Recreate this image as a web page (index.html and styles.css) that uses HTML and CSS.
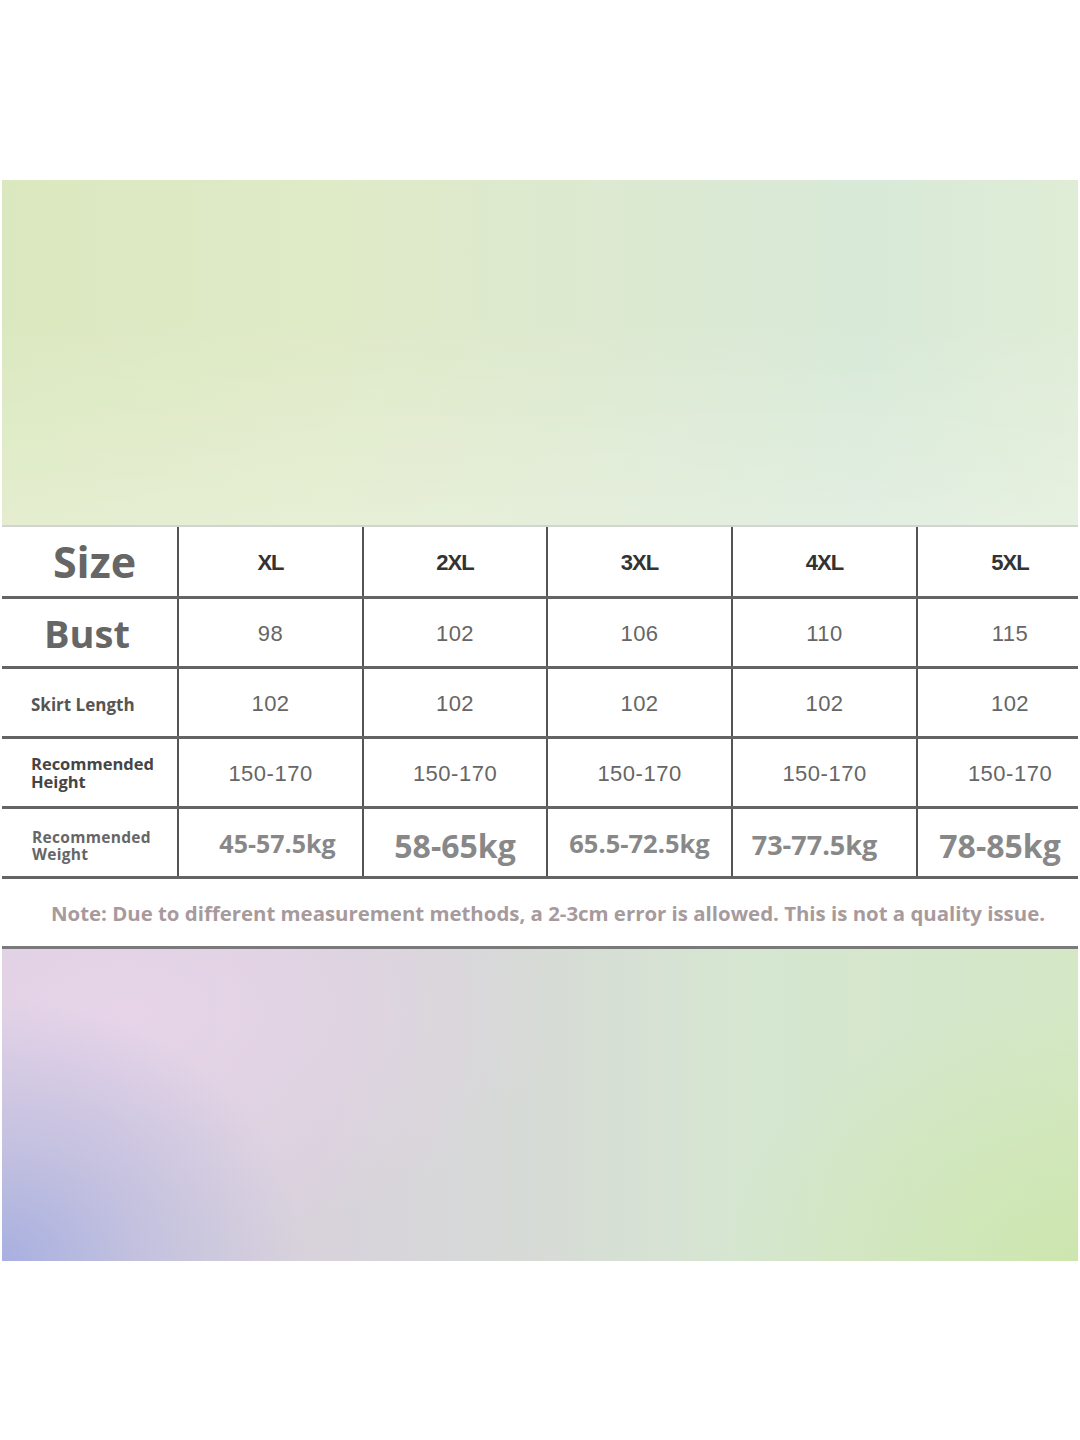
FILE: index.html
```html
<!DOCTYPE html>
<html lang="en">
<head>
<meta charset="utf-8">
<title>Size Chart</title>
<link rel="stylesheet" href="styles.css">
</head>
<body>
<div class="sheet">
  <div class="banner-top"></div>
  <div class="chart">
    <div class="row row-head">
      <div class="cell label label-size">Size</div>
      <div class="cell head">XL</div>
      <div class="cell head">2XL</div>
      <div class="cell head">3XL</div>
      <div class="cell head">4XL</div>
      <div class="cell head last">5XL</div>
    </div>
    <div class="row">
      <div class="cell label label-bust">Bust</div>
      <div class="cell val">98</div>
      <div class="cell val">102</div>
      <div class="cell val">106</div>
      <div class="cell val">110</div>
      <div class="cell val last">115</div>
    </div>
    <div class="row">
      <div class="cell label label-small">Skirt Length</div>
      <div class="cell val">102</div>
      <div class="cell val">102</div>
      <div class="cell val">102</div>
      <div class="cell val">102</div>
      <div class="cell val last">102</div>
    </div>
    <div class="row">
      <div class="cell label label-rec"><span>Recommended<br>Height</span></div>
      <div class="cell val">150-170</div>
      <div class="cell val">150-170</div>
      <div class="cell val">150-170</div>
      <div class="cell val">150-170</div>
      <div class="cell val last">150-170</div>
    </div>
    <div class="row">
      <div class="cell label label-weight"><span>Recommended<br>Weight</span></div>
      <div class="cell kg kg-a">45-57.5kg</div>
      <div class="cell kg kg-b">58-65kg</div>
      <div class="cell kg kg-c">65.5-72.5kg</div>
      <div class="cell kg kg-d">73-77.5kg</div>
      <div class="cell kg kg-e">78-85kg</div>
    </div>
    <div class="note">Note: Due to different measurement methods, a 2-3cm error is allowed. This is not a quality issue.</div>
  </div>
  <div class="banner-bottom"></div>
</div>
</body>
</html>
```
FILE: styles.css
```css
html, body {
  margin: 0;
  padding: 0;
  background: #ffffff;
}

.sheet {
  width: 1076px;
  margin: 180px 0 0 2px;
  display: flex;
  flex-direction: column;
}

.banner-top {
  height: 345px;
  background:
    linear-gradient(to bottom, rgba(255,255,255,0) 40%, rgba(255,255,255,0.25) 100%),
    linear-gradient(90deg, #dbe8bf 0%, #dfeac7 30%, #dde9d0 55%, #d8e9d8 80%, #dfedd6 100%);
}

.chart {
  border-top: 2px solid #d2d4d0;
  background: #ffffff;
  display: flex;
  flex-direction: column;
}

.row {
  display: grid;
  grid-template-columns: 177px 185px 184px 185px 185px 1fr;
  height: 70px;
  border-bottom: 3px solid #646464;
  box-sizing: border-box;
}

.row-head {
  height: 72px;
}

.cell {
  display: flex;
  align-items: center;
  justify-content: center;
  border-right: 2px solid #555555;
  box-sizing: border-box;
}

.cell.last {
  border-right: none;
  padding-left: 24px;
}

.label {
  font-family: "Open Sans", "Noto Sans", sans-serif;
  font-weight: 700;
  color: #666666;
}

.label-size {
  font-size: 43px;
  padding-left: 10px;
}

.label-bust {
  font-size: 38px;
  justify-content: flex-start;
  padding-left: 42px;
}

.label-small {
  font-size: 17px;
  color: #555555;
  justify-content: flex-start;
  padding-left: 29px;
  padding-top: 4px;
}

.label-rec {
  font-size: 16.5px;
  line-height: 18px;
  color: #454545;
  justify-content: flex-start;
  padding-left: 29px;
}

.label-weight {
  font-size: 15.5px;
  line-height: 17px;
  color: #666666;
  letter-spacing: 0.3px;
  justify-content: flex-start;
  padding-left: 30px;
  padding-top: 6px;
}

.head {
  font-family: "Liberation Sans", Arial, sans-serif;
  font-weight: 700;
  font-size: 22px;
  letter-spacing: -1px;
  color: #333333;
  padding-top: 2px;
}

.val {
  font-family: "Liberation Sans", Arial, sans-serif;
  font-size: 22px;
  letter-spacing: 0.5px;
  color: #666666;
  padding-top: 2px;
}

.kg {
  font-family: "Open Sans", "Noto Sans", sans-serif;
  font-weight: 700;
  color: #888888;
}

.kg-a { font-size: 25px; padding-left: 14px; }
.kg-b { font-size: 32px; padding-top: 6px; }
.kg-c { font-size: 25.5px; }
.kg-d { font-size: 27px; padding-right: 20px; padding-top: 4px; }
.kg-e { font-size: 32px; padding-top: 6px; padding-left: 4px; border-right: none; }

.note {
  height: 70px;
  box-sizing: border-box;
  border-bottom: 3px solid #7a7a7a;
  display: flex;
  align-items: center;
  justify-content: center;
  font-family: "Open Sans", "Noto Sans", sans-serif;
  font-weight: 700;
  font-size: 20.4px;
  color: #a79a9d;
  padding-left: 16px;
}

.banner-bottom {
  height: 312px;
  background:
    radial-gradient(ellipse 300px 260px at 0% 100%, rgba(168,176,224,1) 0%, rgba(178,182,222,0.6) 45%, rgba(190,190,225,0) 100%),
    radial-gradient(ellipse 420px 240px at 12% 20%, rgba(232,212,234,0.9) 0%, rgba(228,214,232,0) 100%),
    radial-gradient(ellipse 360px 260px at 100% 100%, rgba(205,230,175,1) 0%, rgba(208,230,185,0) 100%),
    linear-gradient(90deg, #dcd0e1 0%, #d8d2db 30%, #d6dbd6 50%, #d6e6d2 68%, #d4e8c6 100%);
}
```
